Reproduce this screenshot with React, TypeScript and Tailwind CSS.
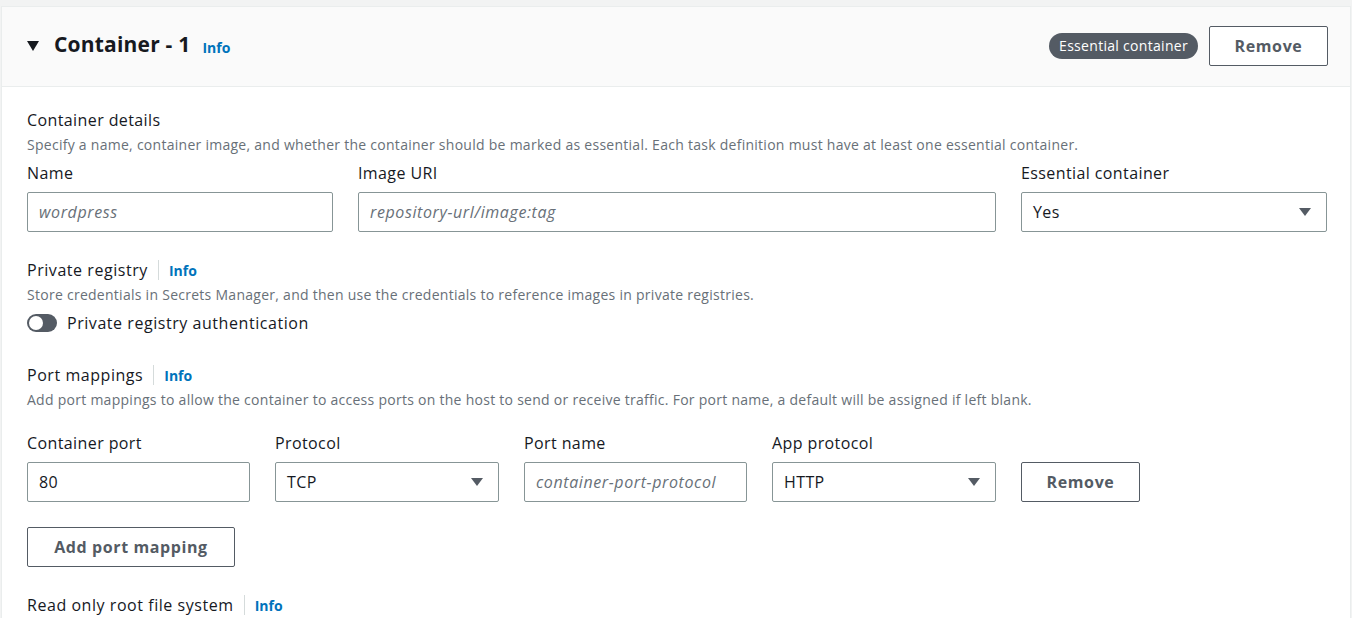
import React from "react";

const font = { fontFamily: "'Open Sans', 'Noto Sans', sans-serif" };

function Caret() {
  return (
    <svg width="14" height="10" viewBox="0 0 14 10" className="shrink-0">
      <path d="M1 1 L13 1 L7 9 Z" fill="#545b64" />
    </svg>
  );
}

function Select({ value, w }: { value: string; w: string }) {
  return (
    <div className={`${w} h-[40px] border border-[#879596] rounded-[2px] bg-white flex items-center justify-between pl-[11px] pr-[14px]`}>
      <span className="text-[16px] tracking-[0.4px] text-[#16191f]">{value}</span>
      <Caret />
    </div>
  );
}

function Input({ value, placeholder, w }: { value?: string; placeholder?: string; w: string }) {
  return (
    <div className={`${w} h-[40px] border border-[#879596] rounded-[2px] bg-white flex items-center px-[11px]`}>
      {value ? (
        <span className="text-[16px] tracking-[0.4px] text-[#16191f]">{value}</span>
      ) : (
        <span className="text-[16px] tracking-[0.6px] italic text-[#687078] whitespace-nowrap">{placeholder}</span>
      )}
    </div>
  );
}

function Field({ label, children }: { label: string; children: React.ReactNode }) {
  return (
    <div className="flex flex-col gap-[8px]">
      <div className="text-[16px] tracking-[0.4px] leading-[22px] text-[#16191f]">{label}</div>
      {children}
    </div>
  );
}

function Heading({ title }: { title: string }) {
  return (
    <div className="flex items-center h-[22px]">
      <span className="text-[16px] tracking-[0.55px] leading-[22px] text-[#16191f]">{title}</span>
      <span className="ml-[10px] h-[20px] border-l border-[#d5dbdb]" />
      <span className="ml-[10px] text-[14px] font-bold text-[#0073bb]">Info</span>
    </div>
  );
}

function Btn({ children, w }: { children: React.ReactNode; w: string }) {
  return (
    <div className={`${w} h-[40px] border border-[#545b64] rounded-[2px] bg-white flex items-center justify-center text-[16px] tracking-[0.6px] font-bold text-[#545b64]`}>
      {children}
    </div>
  );
}

const desc = "mt-[4px] text-[14px] tracking-[0.27px] leading-[20px] text-[#687078]";

export default function App() {
  return (
    <div style={font} className="w-[1352px] h-[618px] overflow-hidden bg-[#f2f3f3] pt-[6px] pl-[1px]">
      <div className="w-[1350px] h-[700px] bg-white border border-[#eaeded]">
        <div className="h-[80px] bg-[#fafafa] border-b border-[#eaeded] flex items-center pl-[25px] pr-[22px]">
          <svg width="12" height="10" viewBox="0 0 12 10" className="mt-[-2px]">
            <path d="M0 0 L12 0 L6 10 Z" fill="#16191f" />
          </svg>
          <span className="ml-[15px] mt-[-3px] text-[21px] tracking-[0.2px] font-bold text-[#16191f]">Container - 1</span>
          <span className="ml-[12px] mt-[1px] text-[14px] font-bold text-[#0073bb]">Info</span>
          <div className="ml-auto flex items-center gap-[11px] mt-[-2px]">
            <span className="h-[26px] px-[10px] rounded-full bg-[#545b64] text-white text-[14px] tracking-[0.3px] flex items-center">Essential container</span>
            <Btn w="w-[119px]">Remove</Btn>
          </div>
        </div>

        <div className="pl-[25px] pt-[22px]">
          <div className="text-[16px] tracking-[0.4px] leading-[22px] text-[#16191f]">Container details</div>
          <div className={desc}>
            Specify a name, container image, and whether the container should be marked as essential. Each task definition must have at least one essential container.
          </div>
          <div className="mt-[7px] flex gap-[25px]">
            <Field label="Name">
              <Input placeholder="wordpress" w="w-[306px]" />
            </Field>
            <Field label="Image URI">
              <Input placeholder="repository-url/image:tag" w="w-[638px]" />
            </Field>
            <Field label="Essential container">
              <Select value="Yes" w="w-[306px]" />
            </Field>
          </div>

          <div className="mt-[27px]">
            <Heading title="Private registry" />
          </div>
          <div className={desc}>
            Store credentials in Secrets Manager, and then use the credentials to reference images in private registries.
          </div>
          <div className="mt-[6px] h-[24px] flex items-center">
            <div className="w-[30px] h-[18px] rounded-full bg-[#545b64] relative">
              <div className="absolute left-[2px] top-[2px] w-[14px] h-[14px] rounded-full bg-white" />
            </div>
            <span className="ml-[10px] text-[16px] tracking-[0.55px] text-[#16191f]">Private registry authentication</span>
          </div>

          <div className="mt-[29px]">
            <Heading title="Port mappings" />
          </div>
          <div className={desc}>
            Add port mappings to allow the container to access ports on the host to send or receive traffic. For port name, a default will be assigned if left blank.
          </div>
          <div className="mt-[22px] flex gap-[25px] items-end">
            <Field label="Container port">
              <Input value="80" w="w-[223px]" />
            </Field>
            <Field label="Protocol">
              <Select value="TCP" w="w-[224px]" />
            </Field>
            <Field label="Port name">
              <Input placeholder="container-port-protocol" w="w-[223px]" />
            </Field>
            <Field label="App protocol">
              <Select value="HTTP" w="w-[224px]" />
            </Field>
            <Btn w="w-[119px]">Remove</Btn>
          </div>
          <div className="mt-[25px]">
            <Btn w="w-[208px]">Add port mapping</Btn>
          </div>
          <div className="mt-[27px]">
            <Heading title="Read only root file system" />
          </div>
        </div>
      </div>
    </div>
  );
}
